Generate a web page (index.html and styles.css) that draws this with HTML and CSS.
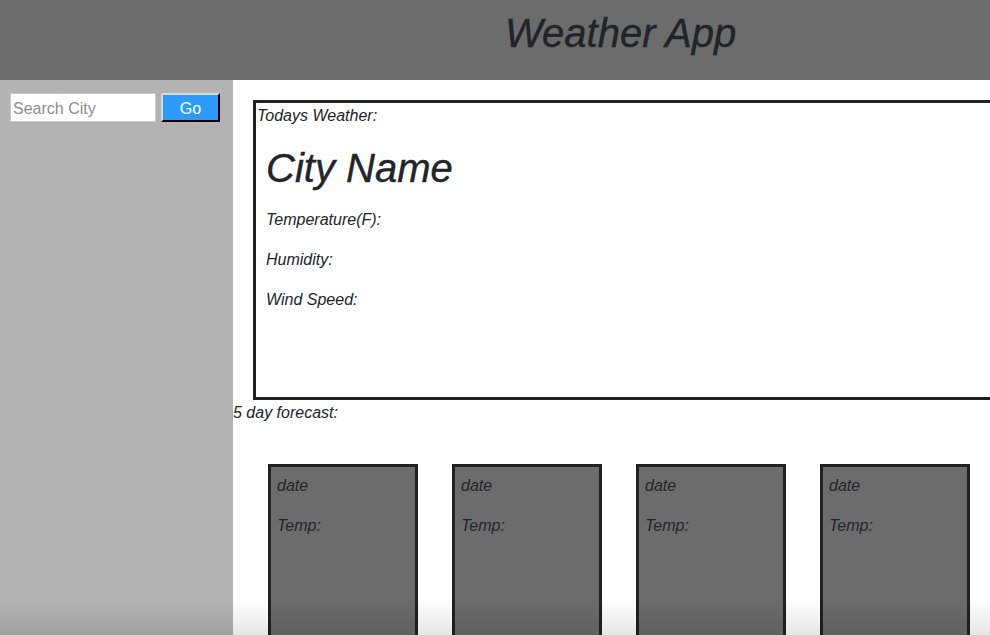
FILE: index.html
```html
<!DOCTYPE html>
<html>
<head>
<meta charset="utf-8">
<link rel="stylesheet" href="styles.css">
</head>
<body>
<header class="top-bar">
  <h1 class="app-title">Weather App</h1>
</header>
<div class="layout">
  <aside class="sidebar">
    <form class="search">
      <input class="search-input" type="text" placeholder="Search City">
      <button class="go-btn" type="button">Go</button>
    </form>
  </aside>
  <main class="main">
    <section class="today">
      <p class="today-label">Todays Weather:</p>
      <h2 class="city">City Name</h2>
      <p class="stat">Temperature(F):</p>
      <p class="stat">Humidity:</p>
      <p class="stat">Wind Speed:</p>
    </section>
    <p class="forecast-label">5 day forecast:</p>
    <div class="cards">
      <div class="card"><p>date</p><p>Temp:</p></div>
      <div class="card"><p>date</p><p>Temp:</p></div>
      <div class="card"><p>date</p><p>Temp:</p></div>
      <div class="card"><p>date</p><p>Temp:</p></div>
    </div>
  </main>
</div>
<div class="bottom-shade"></div>
</body>
</html>
```
FILE: styles.css
```css
* { box-sizing: border-box; }
html, body {
  margin: 0;
  height: 100%;
  overflow: hidden;
}
body {
  font-family: "Liberation Sans", Arial, sans-serif;
  font-style: italic;
  font-size: 16px;
  line-height: 24px;
  color: #212529;
  background: #fff;
}
.top-bar {
  height: 80px;
  background: #6c6c6c;
  padding: 9px 0 0 505px;
}
.app-title {
  margin: 0;
  font-size: 40px;
  line-height: 48px;
  font-weight: 500;
  font-style: italic;
  -webkit-text-stroke: 0.4px #212529;
}
.layout {
  display: flex;
  height: calc(100% - 80px);
}
.sidebar {
  width: 233px;
  flex: none;
  background: #b3b3b3;
  padding: 13px 0 0 10px;
}
.search {
  display: flex;
  gap: 5px;
}
.search-input {
  width: 146px;
  height: 29px;
  border: 1px solid #c8c8c8;
  background: #fff;
  padding: 2px 2px 0;
  font-family: "Liberation Sans", Arial, sans-serif;
  font-style: normal;
  font-size: 16px;
  color: #333;
}
.search-input::placeholder { color: #8e8e8e; }
.go-btn {
  width: 59px;
  height: 29px;
  background: #2e9bfc;
  color: #fff;
  border: 2px outset #d8d8d8;
  border-right-color: #555;
  border-bottom-color: #555;
  font-family: "Liberation Sans", Arial, sans-serif;
  font-style: normal;
  font-size: 16px;
  padding: 2px 0 0;
}
.main {
  flex: none;
  width: 900px;
}
.today {
  margin: 20px 0 0 20px;
  width: 900px;
  height: 300px;
  border: 3px solid #212121;
  padding-top: 1px;
}
.today p { margin: 0; }
.today-label { padding-left: 1px; }
.city {
  margin: 16px 0 0 10px;
  font-size: 40px;
  line-height: 48px;
  font-weight: 500;
  -webkit-text-stroke: 0.4px #212529;
}
.today .stat {
  margin: 16px 0 0 10px;
}
.forecast-label {
  margin: 0;
  padding-top: 1px;
}
.cards {
  display: flex;
  gap: 34px;
  margin: 39px 0 0 35px;
}
.card {
  flex: none;
  width: 150px;
  height: 300px;
  background: #6c6c6c;
  border: 3px solid #212121;
  padding: 7px 6px 6px;
}
.card p { margin: 0 0 16px; }
.bottom-shade {
  position: fixed;
  left: 0;
  right: 0;
  bottom: 0;
  height: 36px;
  background: linear-gradient(to bottom, rgba(0,0,0,0), rgba(0,0,0,0.1));
  pointer-events: none;
}
```
